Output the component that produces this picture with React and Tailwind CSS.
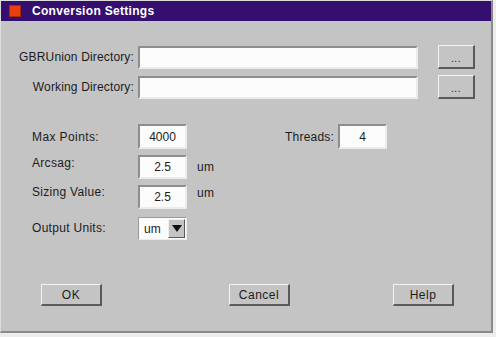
export default function App() {
  const font = { fontFamily: '"Liberation Sans", Arial, sans-serif' };
  const field =
    "bg-[#fcfcfc] border-2 border-t-[#8e8e8e] border-l-[#8e8e8e] border-b-[#ececec] border-r-[#ececec] text-[12px] text-[#1c1c1c] flex items-center justify-center";
  const button =
    "bg-[#c4c4c4] border border-t-[#f2f2f2] border-l-[#f2f2f2] border-b-2 border-r-2 border-b-[#5a5a5a] border-r-[#5a5a5a] text-[12px] text-[#1c1c1c] flex items-center justify-center tracking-[0.5px]";

  return (
    <div className="w-[496px] h-[337px] bg-[#ededed]" style={font}>
      <div className="w-[493px] h-[333px] flex flex-col bg-[#c4c4c4] border-t border-l border-t-[#dcdcdc] border-l-[#dcdcdc] border-r-2 border-b-2 border-r-[#8a8a8a] border-b-[#8a8a8a]">
        {/* title bar */}
        <div className="h-[20px] bg-[#340f6f] flex items-center">
          <div className="ml-[8px] w-[12px] h-[12px] bg-[#ea3f0b] border border-[#a8280a]" />
          <span className="ml-[11px] text-[12px] font-bold text-white tracking-[0.3px]">
            Conversion Settings
          </span>
        </div>

        {/* directory rows */}
        <div className="mt-[24px] flex flex-col gap-[6px] text-[12px] text-[#1c1c1c]">
          <div className="flex items-center h-[24px]">
            <div className="w-[133px] text-right tracking-[0.15px]">GBRUnion Directory:</div>
            <div className={`ml-[4px] w-[280px] h-[23px] ${field}`} />
            <div className={`ml-[20px] w-[37px] h-[24px] ${button}`}>
              <span className="text-[10px] mt-[3px]">...</span>
            </div>
          </div>
          <div className="flex items-center h-[24px]">
            <div className="w-[133px] text-right tracking-[0.15px]">Working Directory:</div>
            <div className={`ml-[4px] w-[280px] h-[23px] ${field}`} />
            <div className={`ml-[20px] w-[37px] h-[24px] ${button}`}>
              <span className="text-[10px] mt-[3px]">...</span>
            </div>
          </div>
        </div>

        {/* settings */}
        <div className="mt-[25px] pl-[31px] flex flex-col text-[12px] text-[#1c1c1c]">
          <div className="flex items-start h-[25px]">
            <div className="w-[106px] mt-[4px] tracking-[0.4px]">Max Points:</div>
            <div className={`w-[49px] h-[25px] ${field}`}>4000</div>
            <div className="w-[147px] mt-[4px] text-right tracking-[0.2px]">Threads:</div>
            <div className={`ml-[4px] w-[49px] h-[25px] ${field}`}>4</div>
          </div>
          <div className="mt-[6px] flex items-start h-[24px]">
            <div className="w-[106px] mt-[-1px] tracking-[0.3px]">Arcsag:</div>
            <div className={`w-[49px] h-[24px] ${field}`}>2.5</div>
            <div className="ml-[10px] mt-[3px] tracking-[0.3px]">um</div>
          </div>
          <div className="mt-[6px] flex items-start h-[24px]">
            <div className="w-[106px] mt-[-2px] tracking-[0.3px]">Sizing Value:</div>
            <div className={`w-[49px] h-[24px] ${field}`}>2.5</div>
            <div className="ml-[10px] mt-[-1px] tracking-[0.3px]">um</div>
          </div>
          <div className="mt-[8px] flex items-start h-[23px]">
            <div className="w-[106px] mt-[2px] tracking-[0.3px]">Output Units:</div>
            <div className="w-[49px] h-[23px] flex bg-[#fcfcfc] border border-t-[#9a9a9a] border-l-[#9a9a9a] border-b-[#ececec] border-r-[#ececec]">
              <div className="flex-1 flex items-center pl-[5px]">um</div>
              <div className="w-[17px] my-[1px] mr-[1px] bg-[#c4c4c4] border border-t-[#f2f2f2] border-l-[#f2f2f2] border-b-[#5a5a5a] border-r-[#5a5a5a] flex items-center justify-center">
                <svg width="10" height="7" viewBox="0 0 10 7">
                  <path d="M0 0 H10 L5 7 Z" fill="#111" />
                </svg>
              </div>
            </div>
          </div>
        </div>

        {/* buttons */}
        <div className="mt-[44px] pl-[40px] flex">
          <div className={`w-[61px] h-[22px] ${button}`}>OK</div>
          <div className={`ml-[127px] w-[61px] h-[22px] ${button}`}>Cancel</div>
          <div className={`ml-[103px] w-[61px] h-[22px] ${button}`}>Help</div>
        </div>
      </div>
    </div>
  );
}
